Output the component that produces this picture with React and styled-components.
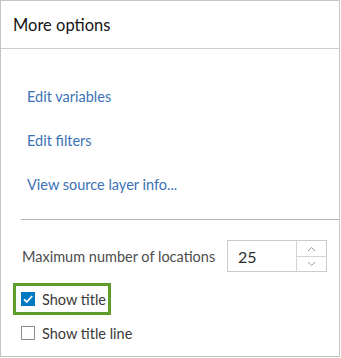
import React from "react";
import styled, { createGlobalStyle } from "styled-components";

const Global = createGlobalStyle`
  html, body { margin: 0; padding: 0; background: #fff; }
  body { font-family: Lato, "Open Sans", sans-serif; }
`;

const Panel = styled.div`
  box-sizing: border-box;
  width: 340px;
  height: 357px;
  border: 1px solid #c4c4c4;
  background: #fff;
  display: flex;
  flex-direction: column;
`;

const Header = styled.div`
  box-sizing: border-box;
  height: 48px;
  border-bottom: 1px solid #cfcfcf;
  padding: 0 12px;
  display: flex;
  align-items: center;
  font-size: 16.5px;
  color: #151515;
`;

const Links = styled.div`
  display: flex;
  flex-direction: column;
  gap: 24px;
  padding: 38px 26px 0;
`;

const LinkItem = styled.a`
  display: block;
  height: 20px;
  line-height: 20px;
  font-size: 14.5px;
  color: #3b72b6;
  text-decoration: none;
  cursor: pointer;
`;

const Divider = styled.div`
  margin: 24px 0 0 20px;
  height: 1px;
  background: #b5b5b5;
`;

const Body = styled.div`
  display: flex;
  flex-direction: column;
  padding: 20px 12px 0;
`;

const FieldRow = styled.div`
  display: grid;
  grid-template-columns: 205px 100px;
  align-items: center;
  padding-left: 9px;
`;

const FieldLabel = styled.span`
  font-size: 14.5px;
  color: #4d4d4d;
  white-space: nowrap;
`;

const NumberBox = styled.div`
  box-sizing: border-box;
  height: 32px;
  border: 1px solid #cccccc;
  display: grid;
  grid-template-columns: 1fr 30px;
`;

const NumberValue = styled.div`
  display: flex;
  align-items: center;
  padding-left: 10px;
  font-size: 16px;
  color: #2b2b2b;
`;

const Spinner = styled.div`
  border-left: 1px solid #d4d4d4;
  display: grid;
  grid-template-rows: 1fr 1fr;
`;

const SpinBtn = styled.div`
  display: flex;
  align-items: center;
  justify-content: center;
  border-top: ${(p) => (p.$bottom ? "1px solid #d4d4d4" : "none")};
`;

const Highlight = styled.div`
  box-sizing: border-box;
  align-self: flex-start;
  margin-top: 11px;
  width: 98px;
  height: 32px;
  border: 3px solid #5e9c2c;
  padding-left: 5px;
  display: flex;
  align-items: center;
`;

const CheckRow = styled.label`
  display: flex;
  align-items: center;
  gap: 7px;
  font-size: 14.5px;
  color: #3a3a3a;
  white-space: nowrap;
  cursor: pointer;
`;

const PlainRow = styled(CheckRow)`
  margin-top: 11px;
  padding-left: 8px;
  height: 14px;
`;

const Box = styled.span`
  box-sizing: border-box;
  width: 14px;
  height: 14px;
  flex: 0 0 14px;
  display: flex;
  align-items: center;
  justify-content: center;
  background: ${(p) => (p.$checked ? "#0079c1" : "#fff")};
  border: 1px solid ${(p) => (p.$checked ? "#0079c1" : "#8c8c8c")};
`;

const Chevron = ({ up }) => (
  <svg width="9" height="6" viewBox="0 0 9 6">
    <path
      d={up ? "M1 5 L4.5 1.5 L8 5" : "M1 1 L4.5 4.5 L8 1"}
      fill="none"
      stroke="#9a9a9a"
      strokeWidth="1"
    />
  </svg>
);

const Check = () => (
  <svg width="12" height="12" viewBox="0 0 12 12">
    <path d="M2 6.3 L4.8 9 L10.2 3" fill="none" stroke="#fff" strokeWidth="1.8" />
  </svg>
);

export default function App() {
  return (
    <>
      <Global />
      <Panel>
        <Header>More options</Header>
        <Links>
          <LinkItem>Edit variables</LinkItem>
          <LinkItem>Edit filters</LinkItem>
          <LinkItem>View source layer info...</LinkItem>
        </Links>
        <Divider />
        <Body>
          <FieldRow>
            <FieldLabel>Maximum number of locations</FieldLabel>
            <NumberBox>
              <NumberValue>25</NumberValue>
              <Spinner>
                <SpinBtn>
                  <Chevron up />
                </SpinBtn>
                <SpinBtn $bottom>
                  <Chevron />
                </SpinBtn>
              </Spinner>
            </NumberBox>
          </FieldRow>
          <Highlight>
            <CheckRow>
              <Box $checked>
                <Check />
              </Box>
              Show title
            </CheckRow>
          </Highlight>
          <PlainRow>
            <Box />
            Show title line
          </PlainRow>
        </Body>
      </Panel>
    </>
  );
}
